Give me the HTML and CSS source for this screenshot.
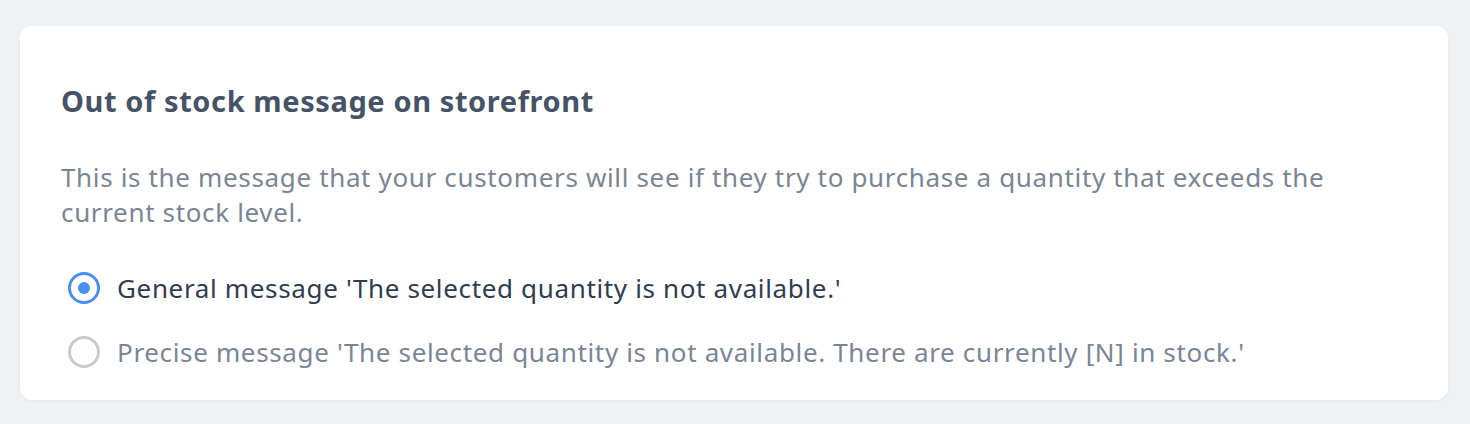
FILE: index.html
```html
<!DOCTYPE html>
<html lang="en">
<head>
  <meta charset="UTF-8" />
  <title>Inventory settings</title>
  <link rel="stylesheet" href="styles.css">
</head>
<body>
<div class="card">
  <h2 class="card-title">Out of stock message on storefront</h2>
  <p class="card-desc">This is the message that your customers will see if they try to purchase a quantity that exceeds the current stock level.</p>

  <div class="options">
    <label class="option">
      <input type="radio" name="oos" checked>
      <span class="dot"></span>
      <span class="option-text">General message 'The selected quantity is not available.'</span>
    </label>
    <label class="option">
      <input type="radio" name="oos">
      <span class="dot"></span>
      <span class="option-text">Precise message 'The selected quantity is not available. There are currently [N] in stock.'</span>
    </label>
  </div>
</div>
</body>
</html>
```

FILE: styles.css
```css
body {
  margin: 0;
  padding: 26px 22px 24px 20px;
  background: #eff2f5;
  font-family: "Noto Sans", sans-serif;
}
.card {
  background: #fff;
  border-radius: 12px;
  box-shadow: 0 1px 3px rgba(40, 60, 90, 0.06);
  padding: 57px 41px 28px;
}
.card-title {
  margin: 0;
  font-size: 29px;
  line-height: 36px;
  font-weight: 700;
  letter-spacing: 0.6px;
  color: #465366;
}
.card-desc {
  margin: 41px 0 0;
  font-size: 26px;
  line-height: 35px;
  letter-spacing: 0.65px;
  color: #7a8594;
  max-width: 1300px;
}
.options {
  margin-top: 38px;
  display: flex;
  flex-direction: column;
  gap: 24px;
}
.option {
  display: flex;
  align-items: center;
  height: 40px;
  gap: 17px;
  padding-left: 7px;
  cursor: pointer;
}
.option input {
  display: none;
}
.dot {
  box-sizing: border-box;
  width: 32px;
  height: 32px;
  border-radius: 50%;
  border: 3px solid #c4cbd4;
  display: flex;
  align-items: center;
  justify-content: center;
}
.option input:checked + .dot {
  border-color: #4a8ff2;
}
.option input:checked + .dot::after {
  content: "";
  width: 12px;
  height: 12px;
  border-radius: 50%;
  background: #4a8ff2;
}
.option-text {
  font-size: 26px;
  letter-spacing: 0.65px;
  color: #7a8596;
}
.option input:checked ~ .option-text {
  color: #313c4f;
}
```
